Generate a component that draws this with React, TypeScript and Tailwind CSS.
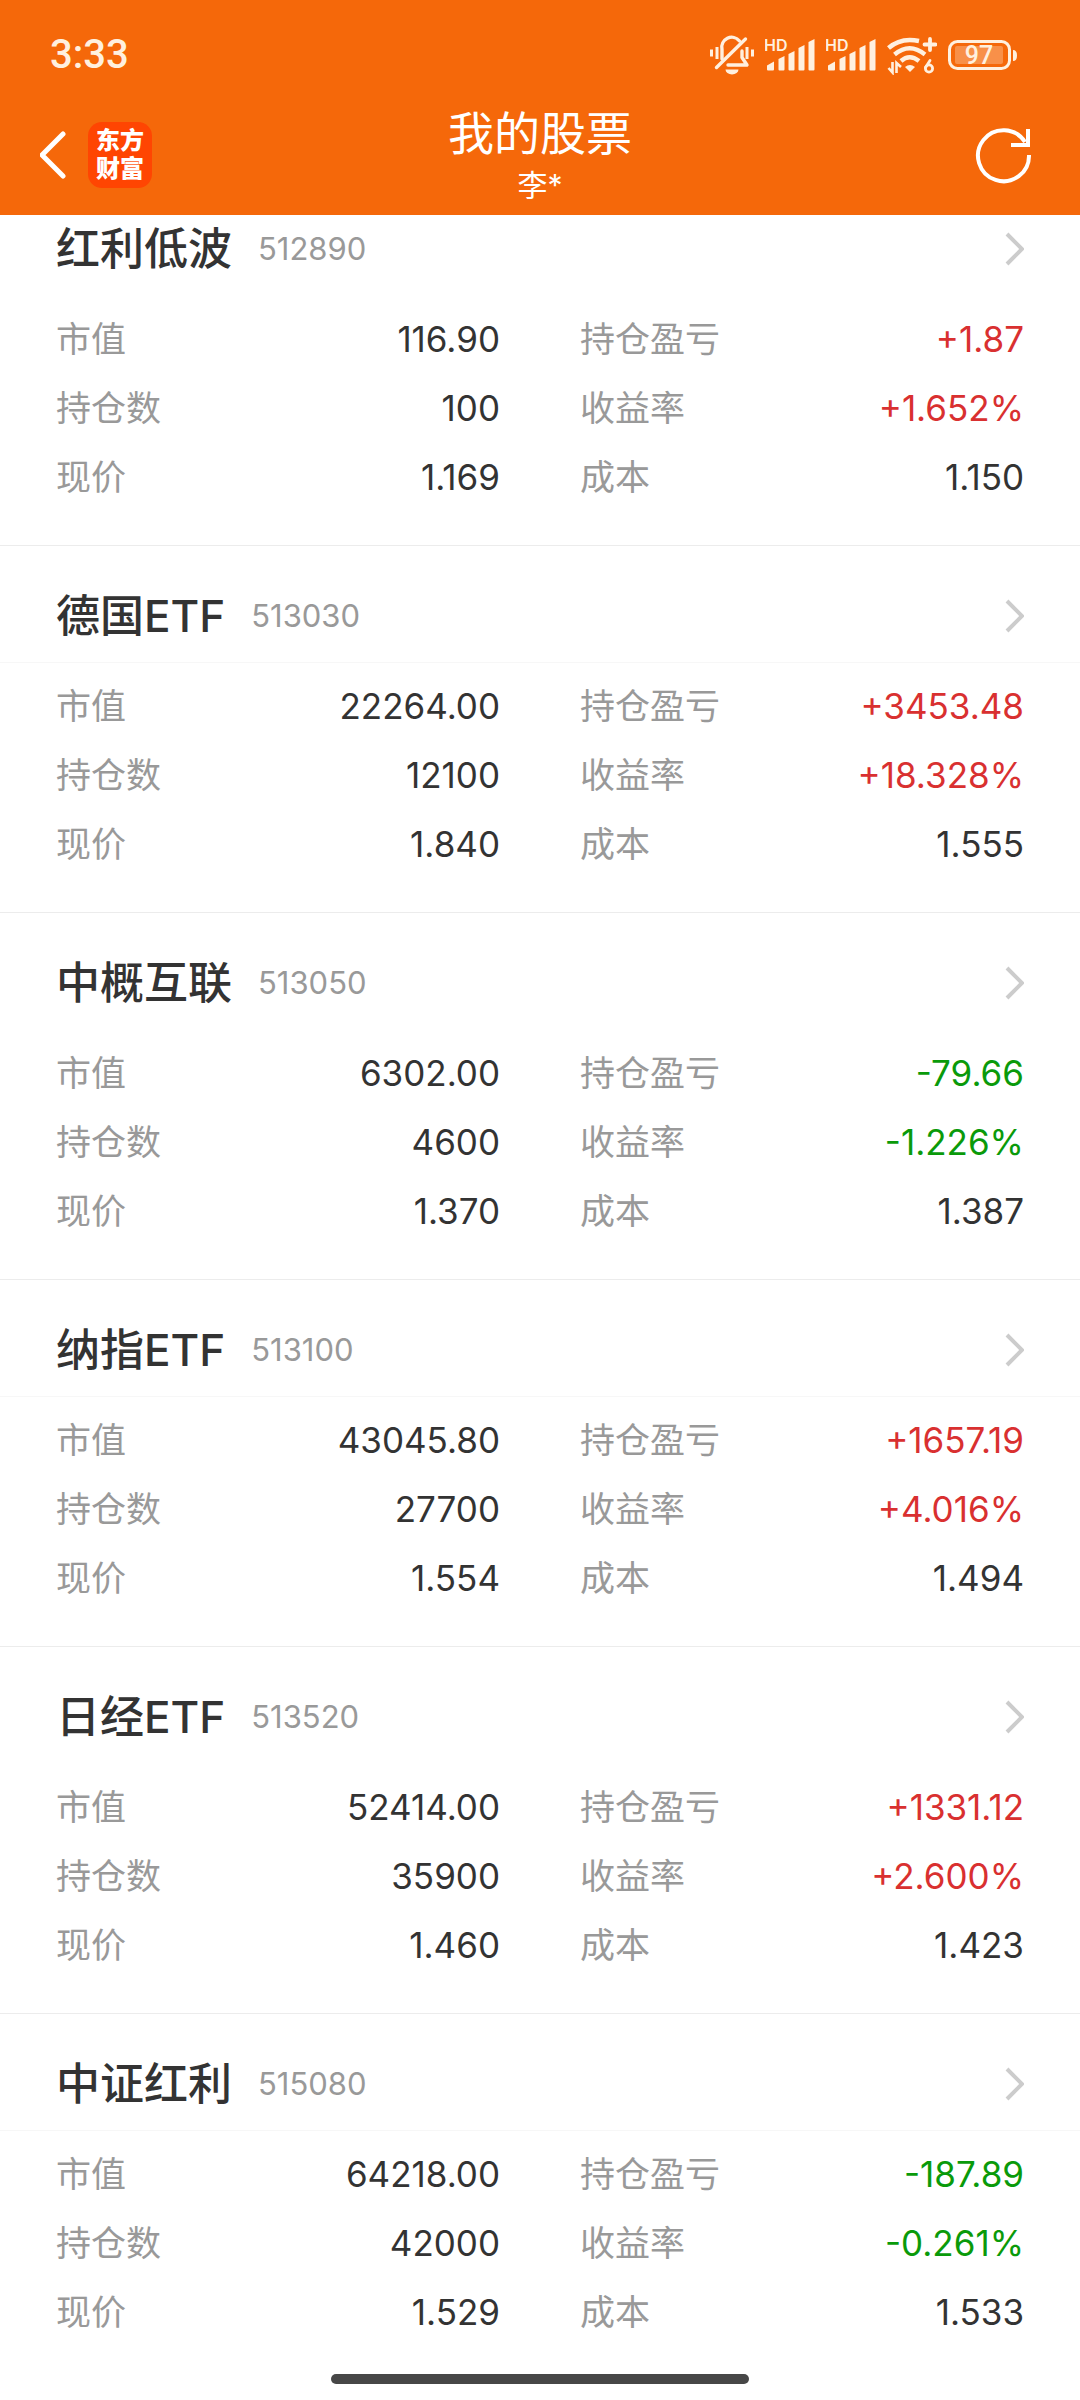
import clsx from "clsx";

type Holding = {
  name: string;
  code: string;
  marketValue: string;
  profit: string;
  shares: string;
  rate: string;
  price: string;
  cost: string;
};

const holdings: Holding[] = [
  { name: "红利低波", code: "512890", marketValue: "116.90", profit: "+1.87", shares: "100", rate: "+1.652%", price: "1.169", cost: "1.150" },
  { name: "德国ETF", code: "513030", marketValue: "22264.00", profit: "+3453.48", shares: "12100", rate: "+18.328%", price: "1.840", cost: "1.555" },
  { name: "中概互联", code: "513050", marketValue: "6302.00", profit: "-79.66", shares: "4600", rate: "-1.226%", price: "1.370", cost: "1.387" },
  { name: "纳指ETF", code: "513100", marketValue: "43045.80", profit: "+1657.19", shares: "27700", rate: "+4.016%", price: "1.554", cost: "1.494" },
  { name: "日经ETF", code: "513520", marketValue: "52414.00", profit: "+1331.12", shares: "35900", rate: "+2.600%", price: "1.460", cost: "1.423" },
  { name: "中证红利", code: "515080", marketValue: "64218.00", profit: "-187.89", shares: "42000", rate: "-0.261%", price: "1.529", cost: "1.533" },
];

const MutedBell = () => (
  <svg className="h-10 w-11" viewBox="0 0 44 40" fill="none" stroke="currentColor" strokeWidth="3.4" strokeLinecap="round">
    <path d="M12 24V14.500a10 10 0 0 1 17.500-8.500" />
    <path d="M32 16v6.500l5 7.500H18" strokeLinejoin="round" />
    <path d="M35.500 4L6.500 32.500" />
    <path d="M15.500 34.500h13a6.500 5 0 0 1-13 0z" fill="currentColor" stroke="none" />
    <path d="M1.500 14.500v7M7 12v12M37 12v12M42.500 14.500v7" strokeWidth="3" strokeLinecap="butt" />
  </svg>
);

const Signal = () => (
  <svg className="h-10 w-[50px]" viewBox="0 0 50 40" fill="currentColor">
    <text x="-1" y="16" fontSize="16" fontWeight="600" fontFamily="Inter, sans-serif">HD</text>
    <path d="M2 34.500v-4l7-4v8a1 1 0 0 1-1 1H3a1 1 0 0 1-1-1z" />
    <path d="M13.500 34.500v-10.500l6-3v13.500a1 1 0 0 1-1 1h-4a1 1 0 0 1-1-1z" />
    <path d="M23.500 34.500V19l6-3v18.500a1 1 0 0 1-1 1h-4a1 1 0 0 1-1-1z" />
    <path d="M33.500 34.500V13l6-3v24.500a1 1 0 0 1-1 1h-4a1 1 0 0 1-1-1z" />
    <path d="M43.500 34.500V7l6-3v30.500a1 1 0 0 1-1 1h-4a1 1 0 0 1-1-1z" />
  </svg>
);

const Wifi = () => (
  <svg className="h-10 w-[50px]" viewBox="0 0 50 40" fill="none" stroke="currentColor" strokeWidth="4.4">
    <path d="M1.500 13Q14 2 32 6" />
    <path d="M7.500 19.500Q22.500 7 38 19.500" />
    <path d="M14 26Q22.500 18.500 32 26" />
    <path d="M18 32q5-4 10 0l-5 5z" fill="currentColor" stroke="none" />
    <path d="M43 4v11M37.500 9.500h11" strokeWidth="3.800" strokeLinecap="round" />
    <path d="M5.500 27v10.500L1.500 33M9.500 38V28l4.500 4" strokeWidth="2.600" />
    <path d="M43 25.500l-4.500 7" strokeWidth="2.800" strokeLinecap="round" />
    <circle cx="42" cy="33.500" r="3.600" strokeWidth="2.800" />
  </svg>
);

const Battery = () => (
  <svg className="h-10 w-[70px]" viewBox="0 0 70 40" fill="none">
    <rect x="1.500" y="6.500" width="60" height="27" rx="8" stroke="currentColor" strokeWidth="3" />
    <rect x="7" y="11" width="48" height="18" rx="2" fill="currentColor" fillOpacity="0.300" />
    <path d="M65 15q4 0 4 5.500t-4 5.500z" fill="currentColor" />
    <text x="31" y="29" textAnchor="middle" fontSize="25" fontWeight="500" fontFamily="Roboto, sans-serif" fill="currentColor">97</text>
  </svg>
);

const StatusBar = () => (
  <div className="flex h-[102px] items-center justify-between pl-[50px] pr-[62px] pt-2 text-[#fff0df]">
    <span className="font-[Roboto,sans-serif] text-[40px] font-medium leading-10">3:33</span>
    <div className="flex items-center gap-[11px]">
      <MutedBell />
      <Signal />
      <Signal />
      <Wifi />
      <Battery />
    </div>
  </div>
);

const NavBar = () => (
  <div className="grid h-[113px] grid-cols-[1fr_auto_1fr] items-center px-10 pb-2 text-white">
    <div className="flex items-center gap-5">
      <button type="button" aria-label="返回">
        <svg className="h-[50px] w-7" viewBox="0 0 28 50" fill="none" stroke="currentColor" strokeWidth="5" strokeLinecap="round">
          <path d="M23 4L2 25l21 21" />
        </svg>
      </button>
      <a href="#home" className="flex h-[66px] w-16 items-center justify-center rounded-[14px] bg-[#ff4502] text-center text-2xl font-black leading-7">
        东方
        <br />
        财富
      </a>
    </div>
    <div className="text-center">
      <h1 className="text-[46px] leading-[60px]">我的股票</h1>
      <p className="text-[30px] leading-[44px]">李*</p>
    </div>
    <button type="button" aria-label="刷新" className="justify-self-end pr-[7px]">
      <svg className="h-[58px] w-[58px]" viewBox="0 0 58 58" fill="none" stroke="currentColor" strokeWidth="4">
        <path d="M54 29a25.500 25.500 0 1 1-4-13" />
        <path d="M53 3v16H36" />
      </svg>
    </button>
  </div>
);

type FieldProps = {
  label: string;
  value: string;
  colored?: boolean;
};

const Field = ({ label, value, colored }: FieldProps) => (
  <div className="flex items-center justify-between leading-[69px]">
    <dt className="text-[35px] text-[#999999]">{label}</dt>
    <dd
      className={clsx(
        "text-[35px]",
        !colored && "text-[#333333]",
        colored && value.startsWith("+") && "text-[#d93030]",
        colored && value.startsWith("-") && "text-[#0a9a0a]"
      )}
    >
      {value}
    </dd>
  </div>
);

const HoldingItem = ({ item }: { item: Holding }) => (
  <li className="group border-b border-[#ececec] pb-[33px] pt-6 last:border-transparent">
    <button
      type="button"
      className="flex h-[93px] w-full items-center border-b border-transparent px-14 text-left group-even:border-[#f7f7f7]"
    >
      <span className="text-[44px] font-medium leading-[60px] text-[#333333]">{item.name}</span>
      <span className="ml-[26px] text-[31px] text-[#999999]">{item.code}</span>
      <svg className="ml-auto h-9 w-5" viewBox="0 0 20 36" fill="none" stroke="#cccccc" strokeWidth="4">
        <path d="M3 3l15 15L3 33" />
      </svg>
    </button>
    <dl className="grid grid-cols-2 gap-x-20 px-14 pt-[9px]">
      <Field label="市值" value={item.marketValue} />
      <Field label="持仓盈亏" value={item.profit} colored />
      <Field label="持仓数" value={item.shares} />
      <Field label="收益率" value={item.rate} colored />
      <Field label="现价" value={item.price} />
      <Field label="成本" value={item.cost} />
    </dl>
  </li>
);

const App = () => {
  return (
    <div className="min-h-screen overflow-hidden bg-white font-[Inter,'Noto_Sans_CJK_SC',sans-serif]">
      <header className="sticky top-0 z-10 bg-[#f5680a]">
        <StatusBar />
        <NavBar />
      </header>
      {/* list is scrolled slightly under the header */}
      <main className="-mt-9">
        <ul>
          {holdings.map((item) => (
            <HoldingItem key={item.code} item={item} />
          ))}
        </ul>
      </main>
      <div className="fixed inset-x-0 bottom-4 mx-auto h-2.5 w-[418px] rounded-full bg-[#474747]" />
    </div>
  );
};

export default App;
